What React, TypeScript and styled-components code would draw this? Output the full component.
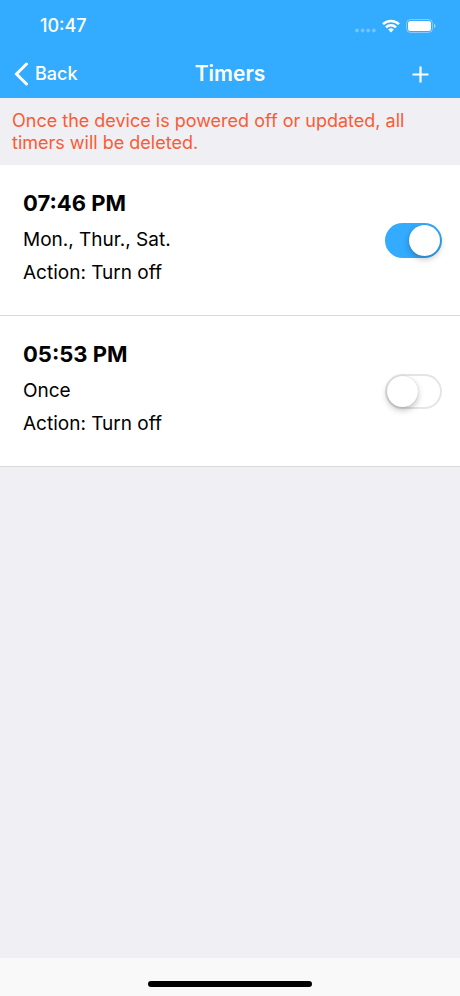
import React, { useState } from "react";
import styled, { createGlobalStyle } from "styled-components";

const GlobalStyle = createGlobalStyle`
  *, *::before, *::after { box-sizing: border-box; }
  body {
    margin: 0;
    background: #efeff4;
    font-family: Inter, "Liberation Sans", sans-serif;
    color: #000;
  }
`;

const Screen = styled.div`
  min-height: 100vh;
  display: flex;
  flex-direction: column;
`;

const Header = styled.header`
  background: #33abff;
  color: #fff;
`;

const StatusBar = styled.div`
  height: 50px;
  padding: 2px 24px 0 40px;
  display: flex;
  align-items: center;
  justify-content: space-between;
`;

const Clock = styled.time`
  font-size: 18px;
  line-height: 20px;
  font-weight: 500;
`;

const StatusIcons = styled.div`
  display: flex;
  align-items: center;
  gap: 6px;
`;

const NavBar = styled.nav`
  height: 48px;
  padding: 0 14px;
  display: grid;
  grid-template-columns: 1fr auto 1fr;
  align-items: center;
`;

const BackLink = styled.a`
  display: flex;
  align-items: center;
  gap: 7px;
  color: inherit;
  text-decoration: none;
  font-size: 18px;
  line-height: 24px;
  font-weight: 500;
`;

const Title = styled.h1`
  margin: 0;
  font-size: 21px;
  line-height: 24px;
  font-weight: 600;
`;

const AddButton = styled.button`
  justify-self: end;
  display: flex;
  padding: 0 17px;
  border: 0;
  background: none;
  color: inherit;
`;

const Notice = styled.p`
  margin: 0;
  padding: 12px 12px 11px;
  font-size: 18px;
  line-height: 22px;
  color: #fa5b35;
`;

const TimerList = styled.ul`
  margin: 0;
  padding: 0;
  list-style: none;
  background: #fff;
`;

const TimerRow = styled.li`
  display: flex;
  align-items: center;
  justify-content: space-between;
  padding: 26px 18px 26px 23px;
  border-bottom: 1px solid #d8d8da;
`;

const TimerTime = styled.h2`
  margin: 0 0 7px;
  font-size: 22px;
  line-height: 25px;
  font-weight: 700;
`;

const TimerText = styled.p`
  margin: 0;
  font-size: 19px;
  line-height: 33px;
`;

const Switch = styled.input`
  appearance: none;
  flex: none;
  margin: 0;
  width: 57px;
  height: 35px;
  padding: 2px;
  border-radius: 18px;
  display: flex;
  background: #fff;
  box-shadow: inset 0 0 0 2px #e5e5e5;

  &::before {
    content: "";
    width: 31px;
    height: 31px;
    border-radius: 50%;
    background: #fff;
    box-shadow: 0 3px 6px rgba(0, 0, 0, 0.25), 0 0 1px rgba(0, 0, 0, 0.2);
  }

  &:checked {
    justify-content: flex-end;
    background: #33abff;
    box-shadow: none;
  }
`;

const HomeArea = styled.footer`
  margin-top: auto;
  height: 38px;
  padding-bottom: 9px;
  display: flex;
  align-items: flex-end;
  justify-content: center;
  background: #f9f9f9;
`;

const HomeIndicator = styled.div`
  width: 164px;
  height: 6px;
  border-radius: 3px;
  background: #000;
`;

const timers = [
  { time: "07:46 PM", days: "Mon., Thur., Sat.", action: "Turn off", on: true },
  { time: "05:53 PM", days: "Once", action: "Turn off", on: false },
];

function TimerItem({ time, days, action, on }: (typeof timers)[number]) {
  const [enabled, setEnabled] = useState(on);
  return (
    <TimerRow>
      <div>
        <TimerTime>{time}</TimerTime>
        <TimerText>{days}</TimerText>
        <TimerText>Action: {action}</TimerText>
      </div>
      <Switch
        type="checkbox"
        role="switch"
        aria-label={`${time} timer`}
        checked={enabled}
        onChange={(e) => setEnabled(e.target.checked)}
      />
    </TimerRow>
  );
}

export default function App() {
  return (
    <Screen>
      <GlobalStyle />
      <Header>
        <StatusBar>
          <Clock>10:47</Clock>
          <StatusIcons>
            <svg width="21" height="14" viewBox="0 0 21 14" fill="#fff" fillOpacity="0.3" aria-hidden="true">
              <circle cx="2" cy="11.500" r="1.900" />
              <circle cx="7.600" cy="11.500" r="1.900" />
              <circle cx="13.200" cy="11.500" r="1.900" />
              <circle cx="18.800" cy="11.500" r="1.900" />
            </svg>
            <svg width="18" height="14" viewBox="0 0 18 14" fill="none" stroke="#fff" strokeWidth="2.500" aria-hidden="true">
              <path d="M1 5.200a11.400 11.400 0 0 1 16 0" />
              <path d="M4 8.400a7 7 0 0 1 10 0" />
              <path d="M9 13.500 6.200 10.600a4 4 0 0 1 5.600 0z" fill="#fff" stroke="none" />
            </svg>
            <svg width="30" height="14" viewBox="0 0 30 14" aria-hidden="true">
              <rect x="0.500" y="0.500" width="26" height="13" rx="4" fill="none" stroke="#fff" strokeOpacity="0.400" />
              <rect x="2" y="2" width="23" height="10" rx="2.500" fill="#fff" />
              <path d="M28 4.800c2 .7 2 3.700 0 4.400z" fill="#fff" fillOpacity="0.500" />
            </svg>
          </StatusIcons>
        </StatusBar>
        <NavBar>
          <BackLink href="#back">
            <svg width="14" height="24" viewBox="0 0 14 24" fill="none" stroke="currentColor" strokeWidth="3" strokeLinecap="round" aria-hidden="true">
              <path d="M12.500 2 2.500 12l10 10" />
            </svg>
            Back
          </BackLink>
          <Title>Timers</Title>
          <AddButton type="button" aria-label="Add timer">
            <svg width="17" height="17" viewBox="0 0 17 17" stroke="currentColor" strokeWidth="2.200" aria-hidden="true">
              <path d="M8.500 0.500v16M0.500 8.500h16" />
            </svg>
          </AddButton>
        </NavBar>
      </Header>
      <main>
        <Notice>Once the device is powered off or updated, all timers will be deleted.</Notice>
        <TimerList>
          {timers.map((t) => (
            <TimerItem key={t.time} {...t} />
          ))}
        </TimerList>
      </main>
      <HomeArea>
        <HomeIndicator />
      </HomeArea>
    </Screen>
  );
}
